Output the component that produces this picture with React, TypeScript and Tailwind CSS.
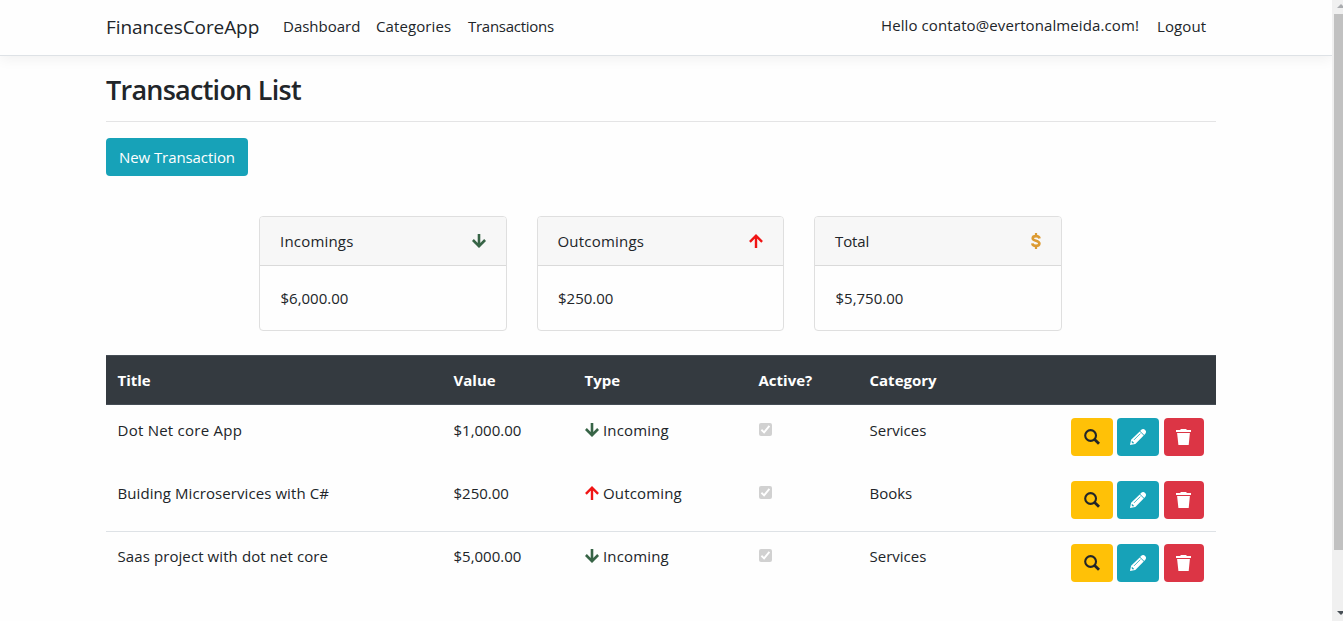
import React from "react";

type IconProps = { className?: string };

const ArrowDown = ({ className = "" }: IconProps) => (
  <svg viewBox="0 0 14 14" className={`h-[14px] w-[14px] ${className}`} fill="none" stroke="currentColor" strokeWidth="2.6">
    <path d="M7 0V12M0.9 6L7 12.1L13.1 6" />
  </svg>
);

const ArrowUp = ({ className = "" }: IconProps) => (
  <svg viewBox="0 0 14 14" className={`h-[14px] w-[14px] ${className}`} fill="none" stroke="currentColor" strokeWidth="2.4">
    <path d="M7 14V1.9M0.9 7.8L7 1.7L13.1 7.8" />
  </svg>
);

const Dollar = () => (
  <svg viewBox="0 0 10 16" className="h-4 w-[10px] text-[#dc9b33]" fill="none" stroke="currentColor">
    <path strokeWidth="2.6" d="M8.5 5.5C8.3 3.8 7.1 3.1 5.1 3.1C3 3.1 1.7 3.8 1.7 5.2C1.7 8.4 8.4 7.1 8.4 10.5C8.4 12 7.1 12.9 5 12.9C2.8 12.9 1.5 12.1 1.3 10.3" />
    <path strokeWidth="2.2" d="M5 0V3M5 13V16" />
  </svg>
);

const Search = () => (
  <svg viewBox="0 0 16 16" className="h-4 w-4" fill="none" stroke="currentColor">
    <circle cx="6.6" cy="6.5" r="5.4" strokeWidth="2.1" />
    <path d="M10.4 10.3L15 14.8" strokeWidth="2.8" />
  </svg>
);

const Pencil = () => (
  <svg viewBox="0 0 16 16" className="h-4 w-4">
    <path fill="currentColor" d="M10.8 1.2C12.2-.3 14-.3 15.1 .9C16.4 2.1 16.3 3.8 14.9 5.2L14.2 5.9L10.1 1.9ZM9.7 2.5L13.7 6.4L5.3 15L0 16L1.1 10.8Z" />
    <path fill="none" stroke="#17a2b8" strokeWidth="0.8" d="M10.3 4.6L4 10.9" />
    <path fill="#17a2b8" d="M1.9 11.8L4.2 14L2.8 14.4L1.6 13.2Z" />
  </svg>
);

const Trash = () => (
  <svg viewBox="0 0 15 16" className="h-4 w-[15px]" fill="currentColor">
    <path d="M0 1H4.2L4.8 0H10.2L10.8 1H15V3H0ZM1.1 4H13.9L12.7 16H2.4Z" />
  </svg>
);

const CheckedBox = () => (
  <span role="checkbox" aria-checked="true" aria-disabled="true" className="mt-[5px] block h-[13px] w-[13px] rounded-[2px] bg-[#d1d1d1]">
    <svg viewBox="0 0 13 13" className="h-[13px] w-[13px]" fill="none" stroke="#fff" strokeWidth="1.9">
      <path d="M2.4 6.8L5.1 9.4L10.4 2.8" />
    </svg>
  </span>
);

const cards = [
  { title: "Incomings", value: "$6,000.00", icon: <ArrowDown className="text-[#376446]" /> },
  { title: "Outcomings", value: "$250.00", icon: <ArrowUp className="text-[#f01414]" /> },
  { title: "Total", value: "$5,750.00", icon: <Dollar /> },
];

const rows = [
  { title: "Dot Net core App", value: "$1,000.00", incoming: true, category: "Services", line: false, tracking: "tracking-[0.25px]" },
  { title: "Buiding Microservices with C#", value: "$250.00", incoming: false, category: "Books", line: false, tracking: "tracking-[0.08px]" },
  { title: "Saas project with dot net core", value: "$5,000.00", incoming: true, category: "Services", line: true, tracking: "tracking-[0.09px]" },
];

export default function App() {
  return (
    <div className="flex h-[621px] w-full overflow-hidden bg-[#fefefe] font-['Open_Sans','Noto_Sans',sans-serif] text-[15px] leading-6 text-[#212529]">
      <div className="flex min-w-0 flex-1 flex-col overflow-hidden">
        <header className="h-14 shrink-0 border-b border-[#dee2e6] bg-[#fefefe] shadow-[0_4px_12px_rgba(0,0,0,0.05)]">
          <nav className="ml-[106px] flex h-[52px] w-[1110px] items-center whitespace-nowrap">
            <a className="w-[177px] pt-[2px] text-[19px] tracking-[-0.08px]">FinancesCoreApp</a>
            <a className="w-[93px]">Dashboard</a>
            <a className="w-[92px] tracking-[0.1px]">Categories</a>
            <a className="tracking-[-0.27px]">Transactions</a>
            <span className="ml-auto w-[276px] pb-[2px] tracking-[0.1px]">Hello contato@evertonalmeida.com!</span>
            <a className="w-[59px] tracking-[0.1px]">Logout</a>
          </nav>
        </header>
        <main className="ml-[106px] w-[1110px]">
          <h1 className="mt-[17px] text-[27px] leading-[34px] font-semibold tracking-[-0.75px]">Transaction List</h1>
          <hr className="mt-[14px] border-[#e4e4e5]" />
          <button className="mt-4 flex h-[38px] w-[142px] items-center justify-center rounded bg-[#17a2b8] tracking-[-0.08px] whitespace-nowrap text-white">New Transaction</button>
          <section className="mt-10 ml-[153px] flex gap-[30px]">
            {cards.map((c) => (
              <article key={c.title} className="h-[115px] w-[247.5px] overflow-hidden rounded border border-[#dfdfdf] bg-[#fefefe]">
                <div className="flex h-[49px] items-center justify-between border-b border-[#dadada] bg-[#f7f7f7] px-5">
                  <h2 className={c.title === "Total" ? "tracking-[-0.1px]" : "tracking-[0.2px]"}>{c.title}</h2>
                  {c.icon}
                </div>
                <p className="pt-5 pr-5 pl-[20.5px]">{c.value}</p>
              </article>
            ))}
          </section>
          <table className="mt-6 w-[1110px] table-fixed border-separate border-spacing-0 text-left">
            <colgroup>
              <col className="w-[336px]" />
              <col className="w-[131px]" />
              <col className="w-[174px]" />
              <col className="w-[111px]" />
              <col className="w-[190px]" />
              <col />
            </colgroup>
            <thead>
              <tr className="h-[50px] bg-[#343a40] text-white">
                {["Title", "Value", "Type", "Active?", "Category", ""].map((h) => (
                  <th key={h} className="border-y border-[#454d55] p-0 pl-[11.5px] font-bold">{h}</th>
                ))}
              </tr>
            </thead>
            <tbody>
              {rows.map((r) => (
                <tr key={r.title} className={r.line ? "h-[63px] align-top *:border-t *:border-[#dee2e6]" : "h-[63px] align-top *:border-t *:border-transparent"}>
                  <td className={`p-0 pt-3 pl-[11.5px] whitespace-nowrap ${r.tracking}`}>{r.title}</td>
                  <td className="p-0 pt-3 pl-[11.5px]">{r.value}</td>
                  <td className="p-0 pt-3 pl-[11.5px] tracking-[0.15px]">
                    <span className="flex items-center gap-[4.5px]">
                      {r.incoming ? <ArrowDown className="text-[#376446]" /> : <ArrowUp className="text-[#f01414]" />}
                      {r.incoming ? "Incoming" : "Outcoming"}
                    </span>
                  </td>
                  <td className="p-0 pt-3 pl-3"><CheckedBox /></td>
                  <td className="p-0 pt-3 pl-[11.5px]">{r.category}</td>
                  <td className="p-0 pt-3">
                    <div className="flex justify-end pr-3">
                      <button aria-label="Details" className="flex h-[38px] w-[42px] items-center justify-center rounded bg-[#ffc107]"><Search /></button>
                      <button aria-label="Edit" className="ml-1 flex h-[38px] w-[42px] items-center justify-center rounded bg-[#17a2b8] text-white"><Pencil /></button>
                      <button aria-label="Delete" className="ml-[5px] flex h-[38px] w-10 items-center justify-center rounded bg-[#dc3545] pr-px text-white"><Trash /></button>
                    </div>
                  </td>
                </tr>
              ))}
            </tbody>
          </table>
        </main>
      </div>
      <aside className="flex w-[11px] shrink-0 flex-col overflow-hidden bg-[#f0f0f0]">
        <svg className="h-[14px] w-[11px] shrink-0" viewBox="0 0 11 14"><path d="M5 8L9 4L13 8Z" fill="#aaacaf" /></svg>
        <div className="ml-[2px] h-[536px] bg-[#c1c1c1]" />
        <svg className="mt-auto h-4 w-[11px] shrink-0" viewBox="0 0 11 16"><path d="M5 6L9 10L13 6Z" fill="#495057" /></svg>
      </aside>
    </div>
  );
}
